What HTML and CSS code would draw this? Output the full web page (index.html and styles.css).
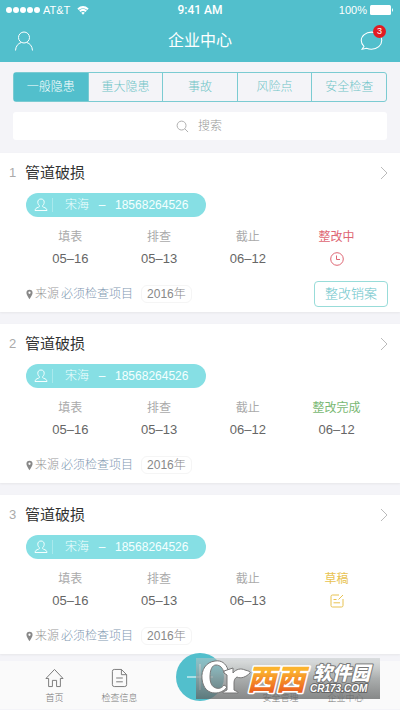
FILE: index.html
```html
<!DOCTYPE html>
<html lang="zh-CN">
<head>
<meta charset="utf-8">
<meta name="viewport" content="width=device-width, initial-scale=1">
<title>企业中心</title>
<link rel="stylesheet" href="styles.css">
</head>
<body>
<svg class="defs" aria-hidden="true">
  <symbol id="person" viewBox="0 0 14 14"><path d="M7 1C4.900 1 3.800 2.300 3.800 4.200c0 1.600.7 2.700 1.600 3.500.3.900-.2 1.300-1.200 1.600-1.700.6-2.900 1.100-3.200 3.200h12c-.3-2.100-1.500-2.600-3.200-3.200-1-.3-1.500-.7-1.200-1.600.9-.8 1.600-1.900 1.600-3.500C10.200 2.300 9.100 1 7 1z"/></symbol>
  <symbol id="chevron" viewBox="0 0 8 14"><path d="M1 1l6 6-6 6"/></symbol>
  <symbol id="pin" viewBox="0 0 8 12"><path fill-rule="evenodd" d="M4 .5A3.500 3.500 0 0 0 .5 4C.5 6.500 4 11.500 4 11.500S7.500 6.500 7.500 4A3.500 3.500 0 0 0 4 .5zm0 2.200a1.300 1.300 0 1 1 0 2.600 1.300 1.300 0 0 1 0-2.600z"/></symbol>
</svg>

<header class="header">
  <div class="status">
    <div class="status-side">
      <span class="dots"><i></i><i></i><i></i><i></i><i></i></span>
      <span>AT&amp;T</span>
      <svg class="wifi" viewBox="0 0 12 9"><path d="M1 3.300Q6-1 11 3.300M2.800 5.300Q6 2.500 9.200 5.300"/><path class="solid" d="M4.200 6.800Q6 5.300 7.800 6.800L6 8.700z"/></svg>
    </div>
    <span class="clock">9:41 AM</span>
    <div class="status-side status-end">
      <span>100%</span>
      <svg class="battery" viewBox="0 0 24 10"><rect width="21" height="10" rx="1.500"/><path d="M22 3q2 2 0 4z"/></svg>
    </div>
  </div>
  <div class="titlebar">
    <button class="icon-button" aria-label="我的"><svg class="user" viewBox="0 0 20 20"><circle cx="10" cy="6.500" r="5.500"/><path d="M1.500 19.500c.3-4.500 2.500-7 5.800-8M18.500 19.500c-.3-4.500-2.500-7-5.800-8"/></svg></button>
    <h1>企业中心</h1>
    <button class="icon-button message" aria-label="消息"><svg class="bubble" viewBox="0 0 22 19"><path d="M11 1C5.500 1 1.200 4.500 1.200 9c0 2.300 1 4.200 2.600 5.600L2 17.300l4.300-.8c1.400.6 3 .9 4.700.9 5.500 0 9.800-3.800 9.800-8.400S16.500 1 11 1z"/></svg><span class="badge">3</span></button>
  </div>
</header>

<section class="filters">
  <nav class="segments">
    <button class="active">一般隐患</button><button>重大隐患</button><button>事故</button><button>风险点</button><button>安全检查</button>
  </nav>
  <label class="search">
    <svg viewBox="0 0 14 14"><circle cx="6" cy="6" r="4.800"/><path d="M9.500 9.500L13 13"/></svg>
    <input type="text" placeholder="搜索" aria-label="搜索">
  </label>
</section>

<main class="list">
  <article class="card">
    <div class="card-head"><span class="index">1</span><h2>管道破损</h2><svg class="chevron"><use href="#chevron"/></svg></div>
    <div class="contact"><svg><use href="#person"/></svg><span class="name">宋海</span><span class="dash">–</span><span>18568264526</span></div>
    <dl class="dates">
      <div><dt>填表</dt><dd>05–16</dd></div>
      <div><dt>排查</dt><dd>05–13</dd></div>
      <div><dt>截止</dt><dd>06–12</dd></div>
      <div class="pending"><dt>整改中</dt><dd><svg viewBox="0 0 14 14"><circle cx="7" cy="7" r="6.300"/><path d="M6.500 3.500v4H10"/></svg></dd></div>
    </dl>
    <div class="card-foot"><svg class="pin"><use href="#pin"/></svg><span>来源</span><a href="#">必须检查项目</a><span class="year">2016年</span><button class="close-case">整改销案</button></div>
  </article>

  <article class="card">
    <div class="card-head"><span class="index">2</span><h2>管道破损</h2><svg class="chevron"><use href="#chevron"/></svg></div>
    <div class="contact"><svg><use href="#person"/></svg><span class="name">宋海</span><span class="dash">–</span><span>18568264526</span></div>
    <dl class="dates">
      <div><dt>填表</dt><dd>05–16</dd></div>
      <div><dt>排查</dt><dd>05–13</dd></div>
      <div><dt>截止</dt><dd>06–12</dd></div>
      <div class="done"><dt>整改完成</dt><dd>06–12</dd></div>
    </dl>
    <div class="card-foot"><svg class="pin"><use href="#pin"/></svg><span>来源</span><a href="#">必须检查项目</a><span class="year">2016年</span></div>
  </article>

  <article class="card">
    <div class="card-head"><span class="index">3</span><h2>管道破损</h2><svg class="chevron"><use href="#chevron"/></svg></div>
    <div class="contact"><svg><use href="#person"/></svg><span class="name">宋海</span><span class="dash">–</span><span>18568264526</span></div>
    <dl class="dates">
      <div><dt>填表</dt><dd>05–16</dd></div>
      <div><dt>排查</dt><dd>05–13</dd></div>
      <div><dt>截止</dt><dd>06–13</dd></div>
      <div class="draft"><dt>草稿</dt><dd><svg viewBox="0 0 14 14"><path d="M9 1H2.500Q1 1 1 2.500v9Q1 13 2.500 13h9q1.500 0 1.500-1.500V5M8.500 5.500L13 1M3.500 5.500h3M3.500 8.800h6.500"/></svg></dd></div>
    </dl>
    <div class="card-foot"><svg class="pin"><use href="#pin"/></svg><span>来源</span><a href="#">必须检查项目</a><span class="year">2016年</span></div>
  </article>
</main>

<nav class="tabbar">
  <a href="#"><svg viewBox="0 0 20 20"><path d="M1 10.500L10 1l9 9.500h-2.800V19h-4v-6.500H7.800V19h-4v-8.500z"/></svg>首页</a>
  <a href="#"><svg viewBox="0 0 20 20"><path d="M12 1H4.500Q2.500 1 2.500 3v14q0 2 2 2h11q2 0 2-2V6.500zV6.500h5.500M6.500 10h7M6.500 14h7"/></svg>检查信息</a>
  <button class="add" aria-label="添加"><svg viewBox="0 0 26 26"><path d="M0 13h26M13 0v26"/></svg></button>
  <a href="#"><svg viewBox="0 0 20 20"></svg>安全管理</a>
  <a href="#"><svg viewBox="0 0 20 20"></svg>企业中心</a>
  <svg class="stamp" viewBox="0 0 184 41" role="img" aria-label="西西软件园 CR173.COM">
    <defs>
      <linearGradient id="plate" x2="0" y2="1"><stop offset="0" stop-color="#c0c6c6" stop-opacity=".5"/><stop offset=".5" stop-color="#909494" stop-opacity=".75"/><stop offset="1" stop-color="#606262" stop-opacity=".75"/></linearGradient>
      <linearGradient id="orange" x2="0" y2="1"><stop offset=".2" stop-color="#fbb32e"/><stop offset="1" stop-color="#e9501c"/></linearGradient>
    </defs>
    <rect width="184" height="41" fill="url(#plate)"/>
    <g class="mark">
      <path d="M32 12C30 5 25 2 19 3 10 4 5 12 6 21c1 9 6 14 13 14 5 0 9-2 12-6l-3-2c-2 3-5 4-8 3-4-1-6-5-6-11 0-7 2-12 6-12 4 0 7 3 8 8h4z"/>
      <path d="M28 13l9-3v5c3-4 8-5 12-3 4 1 6 2 5 3-4 4-9 6-13 4-2 1-3 3-3 6v7l4 2v1H27v-1l4-2V17l-3-2z"/>
    </g>
    <text class="xixi" x="51" y="32">西西</text>
    <text class="brand" x="117" y="22">软件园</text>
    <text class="domain" x="114" y="34">CR173.COM</text>
  </svg>
</nav>
</body>
</html>
```
FILE: styles.css
```css
* { box-sizing: border-box; }

body {
  margin: 0;
  background: #f4f4f8;
  color: #666;
  font: 300 12px/16px "Liberation Sans", "Noto Sans CJK SC", sans-serif;
}

h1, h2, dl, dd { margin: 0; font-weight: 400; }
button { padding: 0; border: 0; background: none; color: inherit; font: inherit; }
a { color: inherit; text-decoration: none; }
svg { display: block; fill: none; stroke: currentColor; flex: none; }
.defs { position: absolute; width: 0; height: 0; }

.header { background: #52bfcc; color: #fff; height: 62px; }
.status { display: flex; align-items: center; height: 20px; padding: 0 6px; font-size: 11px; }
.status-side { display: flex; flex: 1; align-items: center; gap: 3px; }
.status-end { justify-content: flex-end; }
.clock { font-family: Roboto, sans-serif; font-size: 12px; font-weight: 500; }
.dots { display: flex; gap: 1px; }
.dots i { width: 6px; height: 6px; border-radius: 50%; background: #fff; }
.wifi { width: 12px; height: 9px; margin-left: 4px; stroke-width: 2; }
.wifi .solid { fill: #fff; stroke: none; }
.battery { width: 24px; height: 10px; fill: #fff; stroke: none; }

.titlebar { display: flex; align-items: center; justify-content: space-between; height: 42px; padding: 0 14px; }
.titlebar h1 { font-size: 16px; line-height: 20px; }
.icon-button { position: relative; display: flex; width: 26px; }
.user { width: 20px; height: 20px; }
.bubble { width: 23px; height: 20px; }
.badge { position: absolute; top: -6px; right: 0; width: 13px; height: 13px; border-radius: 50%; background: #e21b22; font-size: 9px; line-height: 13px; text-align: center; }

.filters { padding: 10px 13px 13px; }
.segments { display: flex; height: 30px; border: 1px solid #7bcbd2; border-radius: 3px; color: #6fc4c7; }
.segments button { flex: 1; border-left: 1px solid #7bcbd2; }
.segments button:first-child { border-left: 0; }
.segments .active { background: #52bfcc; color: #fff; }
.search { display: flex; align-items: center; justify-content: center; gap: 9px; height: 28px; margin-top: 10px; border-radius: 3px; background: #fff; color: #aaa; }
.search svg { width: 13px; height: 13px; }
.search input { width: 26px; height: 20px; padding: 0; border: 0; outline: 0; background: none; font: inherit; }
.search input::placeholder { color: #999; }

.list { display: grid; gap: 12px; }
.card { height: 159px; padding: 9px 12px 0 26px; background: #fff; box-shadow: 0 1px 2px #e6e6ea; }
.card-head { display: flex; align-items: center; height: 22px; margin-left: -17px; }
.index { width: 16px; color: #aaa; font-size: 13px; }
.card-head h2 { flex: 1; color: #333; font-size: 15px; }
.chevron { width: 8px; height: 14px; color: #bbb; }
.contact { display: flex; align-items: center; width: 180px; height: 24px; margin-top: 9px; padding-left: 8px; border-radius: 12px; background: #86dfe4; color: #f4ffff; }
.contact svg { width: 14px; height: 14px; }
.name { margin-left: 4px; padding-left: 12px; border-left: 1px solid #a9e9ec; line-height: 14px; }
.dash { width: 26px; text-align: center; }
.dates { display: flex; margin: 12px 7px 0 0; text-align: center; }
.dates div { flex: 1; }
.dates dt { color: #aaa; }
.dates dd { display: flex; justify-content: center; margin-top: 6px; font-size: 13px; line-height: 16px; }
.dates svg { width: 14px; height: 14px; margin-top: 1px; }
.dates .pending { color: #de6673; }
.dates .done dt { color: #79b873; }
.dates .draft { color: #e8c250; }
.dates .pending dt, .dates .draft dt { color: inherit; }
.card-foot { display: flex; align-items: center; gap: 2px; height: 26px; margin-top: 14px; color: #999; }
.card-foot a { color: #8299b2; }
.pin { width: 7px; height: 11px; fill: #888; stroke: none; }
.year { margin-left: 6px; padding: 0 5px; border: 1px solid #f5f5f5; border-radius: 6px; color: #888; }
.close-case { width: 74px; height: 26px; margin-left: auto; border: 1px solid #98dcd9; border-radius: 4px; color: #67c3c9; font-size: 13px; }

.tabbar { position: sticky; bottom: 0; display: flex; height: 48px; margin-top: 7px; padding: 0 22px; background: #fafafa; color: #777; font-size: 9px; line-height: 12px; }
.tabbar > a { display: flex; flex: 1; flex-direction: column; align-items: center; gap: 4px; padding-top: 7px; }
.tabbar > a svg { width: 19px; height: 20px; stroke-width: 1; }
.add { display: grid; place-items: center; width: 48px; height: 48px; margin: -8px 24px 0; border-radius: 50%; background: #52bfcc; color: #fff; }
.add svg { width: 26px; height: 26px; }
.stamp { position: absolute; right: 20px; bottom: 10px; width: 184px; height: 41px; stroke: none; }
.mark { fill: #fff; stroke: #777; stroke-width: 1; }
.stamp text { paint-order: stroke; stroke-linejoin: round; font-family: "Liberation Sans", "Noto Sans CJK SC", sans-serif; font-style: italic; font-weight: 900; }
.xixi { fill: url(#orange); stroke: #fff; stroke-width: 3; font-size: 29px; }
.brand { fill: #fff; stroke: #777; stroke-width: 2; font-size: 19px; }
.domain { fill: #fff; stroke: #666; stroke-width: 2; font-size: 10px; }
```
